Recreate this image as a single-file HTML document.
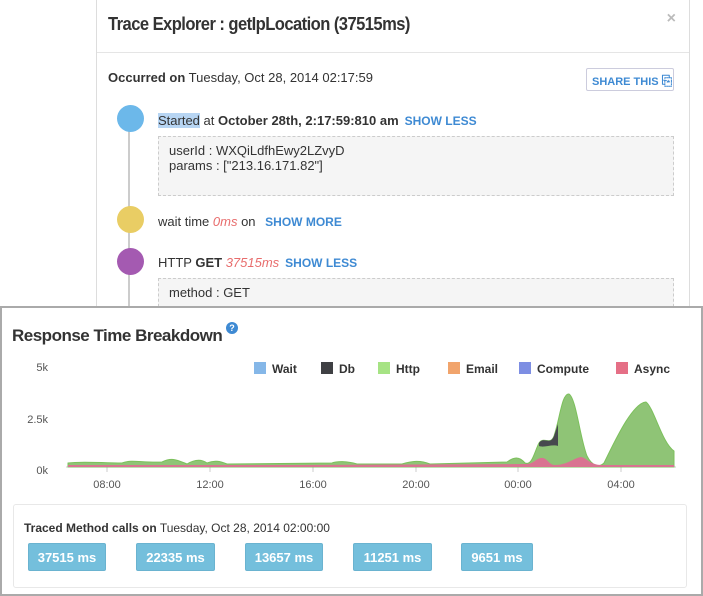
<!DOCTYPE html>
<html><head><style>
body{margin:0;width:703px;height:596px;background:#fff;font-family:"Liberation Sans",sans-serif;color:#333;position:relative;overflow:hidden}
.top{position:absolute;left:96px;top:0;width:592px;height:320px;border:1px solid #ddd;border-top:none;background:#fff}
.hdr{height:52px;border-bottom:1px solid #e5e5e5;position:relative}
.hdr h1{margin:0;position:absolute;left:11px;top:14px;font-size:18px;font-weight:bold;letter-spacing:-0.6px;color:#333;transform:scaleX(0.92);transform-origin:left}
.x{position:absolute;right:13px;top:10px;color:#bbb;font-size:16px;font-weight:bold}
.abs{position:absolute;white-space:nowrap}
.dot{position:absolute;left:20px;width:27px;height:27px;border-radius:50%}
.link{color:#3e8ad3;font-weight:bold;font-size:12px;margin-left:6px}
.box{position:absolute;left:61px;width:516px;background:#f5f5f5;border:1px dashed #ccc;font-size:13px;padding:6px 10px;box-sizing:border-box}
.bot{position:absolute;left:0;top:306px;width:699px;height:286px;border:2px solid #aaa;background:#fff}
.leg{display:inline-block;width:12px;height:12px;vertical-align:-1px;margin-right:6px}
.lg{position:absolute;top:54px;font-size:12px;font-weight:bold;color:#333;white-space:nowrap}
.btn{position:absolute;top:235px;height:28px;background:#74bfdc;color:#fff;font-weight:bold;font-size:13px;line-height:28px;text-align:center;border-radius:2px;border:1px solid #6ab3d0;box-sizing:border-box}
</style></head><body>
<div class="top">
 <div class="hdr"><h1>Trace Explorer : getIpLocation (37515ms)</h1><span class="x">×</span></div>
 <div class="abs" style="left:11px;top:70px;font-size:13px"><b>Occurred on</b> Tuesday, Oct 28, 2014 02:17:59</div>
 <div class="abs" style="left:489px;top:68px;width:88px;height:23px;border:1px solid #ccd;border-radius:2px;font-size:11px;color:#3e8ad3;font-weight:bold;line-height:23px;padding-left:5px;box-sizing:border-box">SHARE THIS <span style="color:#3e8ad3;font-size:13px">⎘</span></div>
 <div class="abs" style="left:31px;top:120px;width:2px;height:200px;background:#ccc"></div>
 <div class="dot" style="top:105px;background:#6cb8ea"></div>
 <div class="abs" style="left:61px;top:113px;font-size:13px"><span style="background:#b7d5f3">Started</span> at <b>October 28th, 2:17:59:810 am</b><span class="link">SHOW LESS</span></div>
 <div class="box" style="top:136px;height:60px;line-height:15px">userId : WXQiLdfhEwy2LZvyD<br>params : ["213.16.171.82"]</div>
 <div class="dot" style="top:206px;background:#e9cd64"></div>
 <div class="abs" style="left:61px;top:214px;font-size:13px">wait time <i style="color:#e86d6d">0ms</i> on <span class="link">SHOW MORE</span></div>
 <div class="dot" style="top:248px;background:#a45ab1"></div>
 <div class="abs" style="left:61px;top:255px;font-size:13px">HTTP <b>GET</b> <i style="color:#e86d6d">37515ms</i><span class="link">SHOW LESS</span></div>
 <div class="box" style="top:278px;height:60px">method : GET</div>
</div>
<div class="bot">
 <div class="abs" style="left:10px;top:18px;font-size:17px;font-weight:bold;color:#333;letter-spacing:-0.5px">Response Time Breakdown</div>
 <div class="abs" style="left:224px;top:14px;width:12px;height:12px;border-radius:50%;background:#3e8ad3;color:#fff;font-size:9px;font-weight:bold;text-align:center;line-height:12px">?</div>
 <div class="lg" style="left:252px"><span class="leg" style="background:#85b7e8"></span>Wait</div>
 <div class="lg" style="left:319px"><span class="leg" style="background:#3f4044"></span>Db</div>
 <div class="lg" style="left:376px"><span class="leg" style="background:#a6e384"></span>Http</div>
 <div class="lg" style="left:446px"><span class="leg" style="background:#f1a46c"></span>Email</div>
 <div class="lg" style="left:517px"><span class="leg" style="background:#7d8ee3"></span>Compute</div>
 <div class="lg" style="left:614px"><span class="leg" style="background:#e56f86"></span>Async</div>
 <svg class="abs" style="left:0;top:0" width="699" height="200">
  <g font-size="11" fill="#555" font-family="Liberation Sans,sans-serif" text-anchor="end">
   <text x="46" y="63">5k</text><text x="46" y="115">2.5k</text><text x="46" y="166">0k</text></g>
  <g font-size="11" fill="#555" font-family="Liberation Sans,sans-serif" text-anchor="middle">
   <text x="105" y="180">08:00</text><text x="208" y="180">12:00</text><text x="311" y="180">16:00</text><text x="414" y="180">20:00</text><text x="516" y="180">00:00</text><text x="619" y="180">04:00</text></g>
  <line x1="64" y1="159" x2="674" y2="159" stroke="#ccc"/>
  <g stroke="#ccc"><line x1="105" y1="159" x2="105" y2="164"/><line x1="208" y1="159" x2="208" y2="164"/><line x1="311" y1="159" x2="311" y2="164"/><line x1="414" y1="159" x2="414" y2="164"/><line x1="516" y1="159" x2="516" y2="164"/><line x1="619" y1="159" x2="619" y2="164"/></g>
  <path d="M66 159 L66 155 C80 153 100 155 120 155 C130 151 140 155 160 154 C170 149 175 152 185 156 C190 153 198 150 205 155 C212 152 218 153 225 156 L330 155 C335 153 345 153 355 156 L400 156 C410 153 418 152 428 156 L505 154 C512 149 517 148 523 155 C530 158 532 145 537 135 C542 128 548 138 552 128 C558 110 560 85 567 86 C574 90 578 130 585 148 C590 158 597 160 602 155 C612 135 630 95 644 94 C652 100 660 135 672 143 L672 159 Z" fill="#8fc476" stroke="#7cc05c"/>
  <path d="M537 135 C542 128 548 138 552 128 L556 116 L556 138 C550 136 542 140 537 138 Z" fill="#47494e"/>
  <path d="M66 159 L66 157 C120 157 200 157 300 157 L525 156 C532 156 535 149 541 150 C546 151 547 157 553 157 C565 157 572 150 579 149 C585 150 588 157 600 157 C620 157 640 157 672 157 L672 159 Z" fill="#d97391"/>
 </svg>
 <div class="abs" style="left:11px;top:196px;width:672px;height:82px;border:1px solid #e8e8e8;border-radius:3px"></div>
 <div class="abs" style="left:22px;top:213px;font-size:12px"><b>Traced Method calls on</b> Tuesday, Oct 28, 2014 02:00:00</div>
 <div class="btn" style="left:26px;width:78px">37515 ms</div>
 <div class="btn" style="left:134px;width:79px">22335 ms</div>
 <div class="btn" style="left:243px;width:78px">13657 ms</div>
 <div class="btn" style="left:351px;width:79px">11251 ms</div>
 <div class="btn" style="left:459px;width:72px">9651 ms</div>
</div>
</body></html>
